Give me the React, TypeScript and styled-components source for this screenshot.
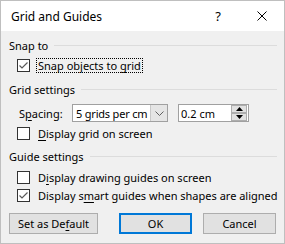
import styled, { createGlobalStyle } from "styled-components";

const Global = createGlobalStyle`
  body {
    margin: 0;
    background: #ffffff;
  }
  * {
    box-sizing: border-box;
  }
`;

const Window = styled.div`
  width: 285px;
  height: 244px;
  border: 1px solid #bfbfbf;
  background: #f0f0f0;
  display: flex;
  flex-direction: column;
  font-family: "Noto Sans", "Open Sans", sans-serif;
  font-size: 11px;
  color: #000;
`;

const TitleBar = styled.div`
  height: 30px;
  background: #ffffff;
  display: flex;
  align-items: center;
  padding-left: 10px;
`;

const Title = styled.div`
  flex: 1;
  font-size: 12px;
`;

const TitleButton = styled.div`
  width: 44px;
  height: 30px;
  display: flex;
  align-items: center;
  justify-content: center;
  font-size: 13px;
`;

const Body = styled.div`
  flex: 1;
  display: flex;
  flex-direction: column;
  padding: 0 8px;
`;

const Heading = styled.div<{ $top: number }>`
  display: flex;
  align-items: center;
  gap: 6px;
  height: 16px;
  margin-top: ${(p) => p.$top}px;
  span {
    white-space: nowrap;
  }
`;

const Rule = styled.div`
  flex: 1;
  height: 1px;
  margin-right: -1px;
  background: #dcdcdc;
`;

const CheckRow = styled.div<{ $top: number }>`
  display: flex;
  align-items: center;
  gap: 6px;
  height: 15px;
  padding-left: 8px;
  margin-top: ${(p) => p.$top}px;
`;

const Box = styled.div`
  width: 13px;
  height: 13px;
  border: 1px solid #333333;
  background: #ffffff;
  display: flex;
  align-items: center;
  justify-content: center;
`;

const Label = styled.span<{ $focus?: boolean }>`
  padding: 0 1px;
  line-height: 13px;
  border: 1px dotted ${(p) => (p.$focus ? "#000" : "transparent")};
  white-space: nowrap;
`;

const Key = styled.span`
  text-decoration: underline;
  text-underline-offset: 2px;
`;

const SpacingRow = styled.div`
  display: flex;
  align-items: center;
  height: 18px;
  margin-top: 7px;
  padding-left: 10px;
`;

const FieldLabel = styled.span`
  width: 53px;
`;

const Select = styled.div`
  width: 96px;
  height: 18px;
  border: 1px solid #a0a0a0;
  background: #ffffff;
  display: flex;
  align-items: center;
  padding-left: 3px;
  span {
    flex: 1;
    white-space: nowrap;
    letter-spacing: -0.2px;
    overflow: hidden;
  }
`;

const DropButton = styled.div`
  width: 17px;
  height: 16px;
  background: #e5e5e5;
  border-left: 1px solid #c8c8c8;
  display: flex;
  align-items: center;
  justify-content: center;
`;

const SpinBox = styled.div`
  width: 71px;
  height: 18px;
  margin-left: 10px;
  border: 1px solid #a0a0a0;
  background: #ffffff;
  display: flex;
  align-items: center;
  padding-left: 2px;
  span {
    flex: 1;
  }
`;

const Spinners = styled.div`
  width: 16px;
  height: 16px;
  display: flex;
  flex-direction: column;
  margin-right: 1px;
`;

const Spin = styled.div`
  flex: 1;
  background: #e1e1e1;
  border: 1px solid #adadad;
  display: flex;
  align-items: center;
  justify-content: center;
`;

const Buttons = styled.div`
  display: flex;
  gap: 11px;
  margin-top: 10px;
`;

const Button = styled.div<{ $width: number; $primary?: boolean }>`
  width: ${(p) => p.$width}px;
  height: 21px;
  background: #e1e1e1;
  border: ${(p) => (p.$primary ? "2px solid #0078d7" : "1px solid #adadad")};
  display: flex;
  align-items: center;
  justify-content: center;
  white-space: nowrap;
  &:first-child {
    margin-right: auto;
  }
`;

const Check = ({ on }: { on: boolean }) => (
  <Box>
    {on && (
      <svg width="11" height="11" viewBox="0 0 11 11">
        <path d="M1.5 5.5 L4 8 L9.5 2.5" fill="none" stroke="#5a5a5a" strokeWidth="1.2" />
      </svg>
    )}
  </Box>
);

export default function App() {
  return (
    <>
      <Global />
      <Window>
        <TitleBar>
          <Title>Grid and Guides</Title>
          <TitleButton>?</TitleButton>
          <TitleButton>
            <svg width="10" height="10" viewBox="0 0 10 10">
              <path d="M0.5 0.5 L9.5 9.5 M9.5 0.5 L0.5 9.5" stroke="#000" strokeWidth="1" />
            </svg>
          </TitleButton>
        </TitleBar>
        <Body>
          <Heading $top={6}>
            <span>Snap to</span>
            <Rule />
          </Heading>
          <CheckRow $top={5}>
            <Check on />
            <Label $focus>
              Snap objects to <Key>g</Key>rid
            </Label>
          </CheckRow>
          <Heading $top={8}>
            <span>Grid settings</span>
            <Rule />
          </Heading>
          <SpacingRow>
            <FieldLabel>
              S<Key>p</Key>acing:
            </FieldLabel>
            <Select>
              <span>5 grids per cm</span>
              <DropButton>
                <svg width="9" height="5" viewBox="0 0 9 5">
                  <path d="M0.5 0.5 L4.5 4.5 L8.5 0.5" fill="none" stroke="#606060" strokeWidth="1" />
                </svg>
              </DropButton>
            </Select>
            <SpinBox>
              <span>0.2 cm</span>
              <Spinners>
                <Spin>
                  <svg width="7" height="4" viewBox="0 0 7 4">
                    <path d="M0 4 L3.5 0 L7 4 Z" fill="#000" />
                  </svg>
                </Spin>
                <Spin>
                  <svg width="7" height="4" viewBox="0 0 7 4">
                    <path d="M0 0 L3.5 4 L7 0 Z" fill="#000" />
                  </svg>
                </Spin>
              </Spinners>
            </SpinBox>
          </SpacingRow>
          <CheckRow $top={4}>
            <Check on={false} />
            <Label>
              <Key>D</Key>isplay grid on screen
            </Label>
          </CheckRow>
          <Heading $top={7}>
            <span>Guide settings</span>
            <Rule />
          </Heading>
          <CheckRow $top={6}>
            <Check on={false} />
            <Label>
              D<Key>i</Key>splay drawing guides on screen
            </Label>
          </CheckRow>
          <CheckRow $top={3}>
            <Check on />
            <Label>
              Display s<Key>m</Key>art guides when shapes are aligned
            </Label>
          </CheckRow>
          <Buttons>
            <Button $width={89}>
              Set as De<Key>f</Key>ault
            </Button>
            <Button $width={73} $primary>
              OK
            </Button>
            <Button $width={73}>Cancel</Button>
          </Buttons>
        </Body>
      </Window>
    </>
  );
}
